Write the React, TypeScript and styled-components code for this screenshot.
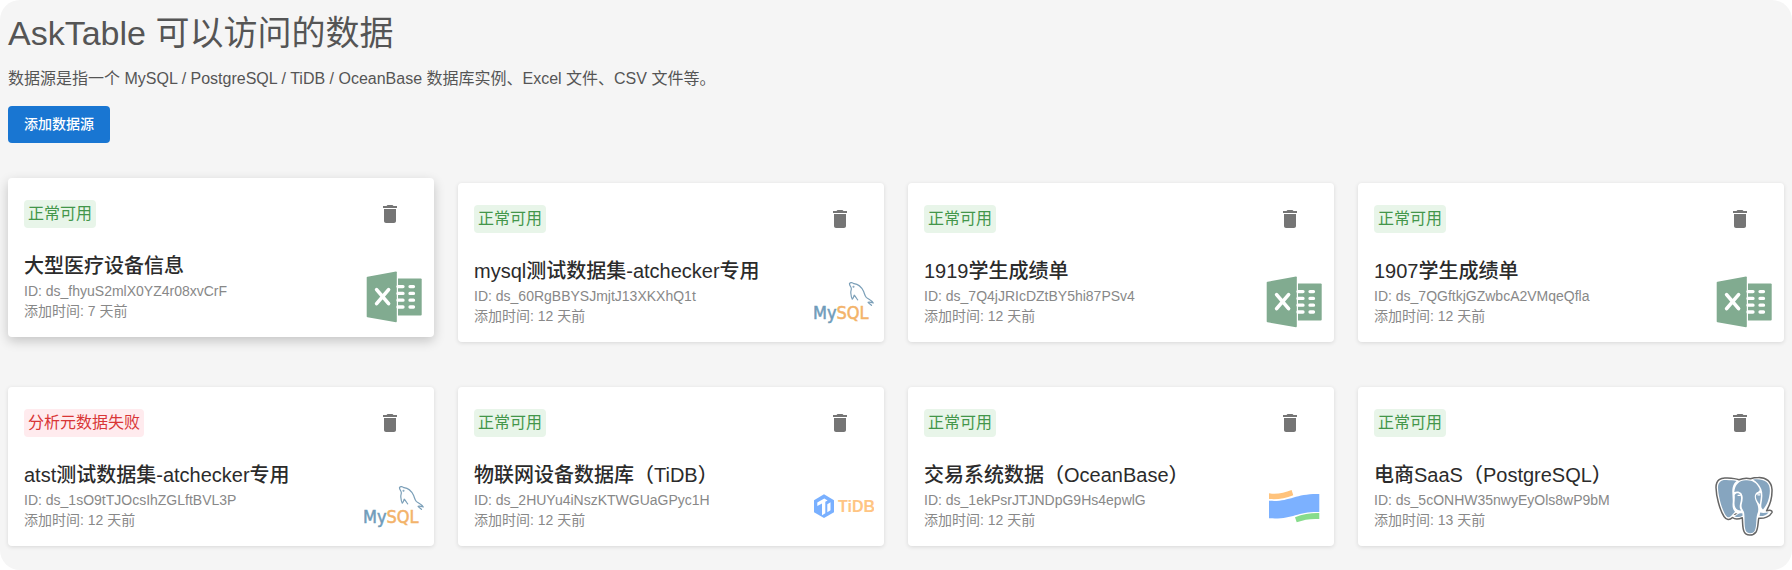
import React from 'react';
import styled, { createGlobalStyle } from 'styled-components';

const GlobalStyle = createGlobalStyle`
  *, *::before, *::after { box-sizing: border-box; }
  body {
    margin: 0;
    background: #ffffff;
    color: #2b2b2b;
    font-family: "Liberation Sans", "Noto Sans CJK SC", sans-serif;
  }
`;

const Page = styled.main`
  padding: 12px 8px 24px;
  border-radius: 20px;
  background: #f5f5f5;
`;

const PageTitle = styled.h1`
  margin: 0 0 13px;
  color: #555555;
  font-size: 34px;
  font-weight: 400;
  line-height: 42px;
`;

const Description = styled.p`
  margin: 0 0 15px;
  color: #555555;
  font-size: 16px;
  line-height: 24px;
`;

const AddButton = styled.button`
  display: block;
  margin: 0 0 40px;
  padding: 6px 16px;
  border: 0;
  border-radius: 4px;
  background: #1976d2;
  color: #ffffff;
  font-family: inherit;
  font-size: 14px;
  font-weight: 500;
  line-height: 25px;
  cursor: pointer;
`;

const CardGrid = styled.section`
  display: grid;
  grid-template-columns: repeat(4, minmax(0, 1fr));
  gap: 45px 24px;
`;

const Card = styled.article<{ $raised?: boolean }>`
  position: relative;
  padding: 16px;
  border-radius: 4px;
  background: #ffffff;
  transform: ${({ $raised }) => ($raised ? 'translateY(-5px)' : 'none')};
  box-shadow: ${({ $raised }) =>
    $raised ? '0 4px 12px rgba(0, 0, 0, 0.2)' : '0 1px 4px rgba(0, 0, 0, 0.12)'};
`;

const CardHeader = styled.div`
  display: flex;
  align-items: center;
  justify-content: space-between;
  margin-bottom: 17px;
  padding-right: 8px;
`;

const Status = styled.span<{ $failed?: boolean }>`
  padding: 2px 4px;
  border-radius: 4px;
  background: ${({ $failed }) => ($failed ? '#ffebee' : '#e8f5e9')};
  color: ${({ $failed }) => ($failed ? '#d93636' : '#43964a')};
  font-size: 16px;
  line-height: 24px;
`;

const IconButton = styled.button`
  display: flex;
  padding: 8px;
  border: 0;
  border-radius: 50%;
  background: transparent;
  color: #757575;
  cursor: pointer;
`;

const SourceName = styled.h2`
  margin: 0;
  color: #2b2b2b;
  font-size: 20px;
  font-weight: 500;
  line-height: 30px;
`;

const Meta = styled.p`
  margin: 0;
  color: #888888;
  font-size: 14px;
  line-height: 20px;
`;

const Logo = styled.svg`
  position: absolute;
  right: 10px;
  bottom: 10px;
  width: 60px;
  height: 60px;
`;

function TrashIcon() {
  return (
    <svg width="24" height="24" viewBox="0 0 24 24" fill="currentColor" aria-hidden="true">
      <path d="M6 19c0 1.1.9 2 2 2h8c1.1 0 2-.9 2-2V7H6v12zM19 4h-3.5l-1-1h-5l-1 1H5v2h14V4z" />
    </svg>
  );
}

function ExcelLogo() {
  const rows = [19.6, 26.4, 33.2, 40];
  return (
    <Logo viewBox="0 0 60 60" role="img" aria-label="Excel">
      <path d="M3.5 9.8 32 4.5q.8 0 .8.8v49q0 .9-.8.9L3.5 50.2q-.8-.2-.8-1V10.8q0-.8.8-1z" fill="#81ab90" />
      <path d="M34 11.5h22.700q1 0 1 1v35q0 1-1 1H34z" fill="#81ab90" />
      <g stroke="#ffffff" strokeLinecap="round" fill="none">
        <path d="M12.6 22.6 24.6 36.6M24.6 22.6 12.6 36.6" strokeWidth="3.600" />
        {rows.map((y) => (
          <path key={y} d={`M34 ${y}H39M46 ${y}H49.5`} strokeWidth="3.300" />
        ))}
      </g>
    </Logo>
  );
}

function MySqlLogo() {
  return (
    <Logo viewBox="0 0 60 60" role="img" aria-label="MySQL">
      <g fill="none" stroke="#7b9fb8" strokeWidth="1.200" strokeLinecap="round" strokeLinejoin="round">
        <path d="M35.5 11.5c1-1.6 3-.9 4.500.2 4.500.5 7.700 3.900 9.500 7.600 1.100 2.400 1.300 4.400 2.800 6.100 1.700 1.700 4.600 2.400 7 5.600-2.400-.9-4.200-1.200-5.200-.7.9 1.200 2.300 1.900 3.400 3.100" />
        <path d="M35.5 11.5c-.3 1.900 1.500 3.100 1.800 5 .2 1.500-.7 2.500-.5 4.500.2 2.200.6 4.600 1.500 6.200.8-.8 1.600-2.800 1.900-4 1.600 1.200 2.100 3.200 3.500 4.600" />
        <circle cx="39.5" cy="14.8" r=".4" />
      </g>
      <text
        x="-1"
        y="47"
        fill="#6f9cba"
        fontFamily="'DejaVu Sans Condensed', 'Open Sans', sans-serif"
        fontSize="18"
        stroke="#6f9cba"
        strokeWidth="0.500"
      >
        My
        <tspan fill="#f3b36a" stroke="#f3b36a">SQL</tspan>
      </text>
    </Logo>
  );
}

function TiDbLogo() {
  return (
    <Logo viewBox="0 0 60 60" role="img" aria-label="TiDB">
      <path d="M10 18.300 20 24.200V36.200L10 42 0 36.200V24.200z" fill="#79b0ff" />
      <path d="M3.300 26.600 10.300 22.500 13.600 24.400 11.300 25.800V37.300L8 39.200V27.400L3.300 30z" fill="#ffffff" />
      <path d="M13.300 28.200 16.500 26.300V34.300L13.300 36.200z" fill="#ffffff" />
      <text x="24" y="36" fill="#ffc584" fontFamily="'Liberation Sans', sans-serif" fontSize="16" fontWeight="700">
        TiDB
      </text>
    </Logo>
  );
}

function OceanBaseLogo() {
  return (
    <Logo viewBox="0 0 60 60" role="img" aria-label="OceanBase">
      <path d="M5 17.300C13 18.300 20 17 27.600 14L29.300 19.300C21 22.700 13 23.700 5 23z" fill="#ffc37c" />
      <path d="M5 24.700C25 26.500 31 17.300 55.300 18V36C32 35.500 28 44 5 42.300z" fill="#7cb1ff" />
      <path d="M31 41.300C39 38 47 36.800 55.300 37V43C47 42.500 40 43.500 32.700 46.300z" fill="#87dc8c" />
    </Logo>
  );
}

function PostgresLogo() {
  const outline =
    'M12.500 2C7 1.300 2 4 2 11.500 2.200 20 5.500 33.500 10 40.500 12.500 44.200 15.500 44.500 18.500 41.500 21 43.800 25.500 43 28.300 41.800 28.800 47 28.300 51.500 30 55.500 32 60 39 60.200 42 56 44.300 52.500 43.800 47 44.800 42.200 50 42.800 56 40.500 58 36.500 58.500 34 56 34 52.500 34.800 56 29 58.200 20 58 13.500 57.500 5.500 52 1.300 44.500 1.500 41 1.500 38.500 2 36.500 2.700 32.500 1.800 28.500 2.300 25 3.800 21 2.300 16.500 2.200 12.500 2z';
  return (
    <Logo viewBox="0 0 60 60" role="img" aria-label="PostgreSQL">
      <path d={outline} fill="#ffffff" stroke="#666666" strokeWidth="1.500" strokeLinejoin="round" />
      <g fill="#86a5bf">
        <path d="M12.500 4C7.500 3.500 4 6 4 11.500 4.200 19.500 7.500 32.500 11.500 39 13.500 42 15.300 42 17.500 39.500L21 35.700C18.500 33.300 18.300 30 18.700 26 19 20 16.800 13 20.200 7.500 21 6.200 22 5.500 22.500 5 19.500 4.200 16 4.200 12.500 4z" />
        <path d="M33 4.200C26 3.500 21 8 20.300 16 22.500 15 25.500 15.200 27.200 17 29.500 20 28.800 24 27.800 28 27 31 28.500 33.500 30 36 31 41 30 50 31.700 54.500 33.200 58.200 38.700 58 40.600 55 43 51 41.700 43 43.300 38 45 34 44.500 30 42 25.500 40 21.500 40.500 18 43 16.300 46 15 46.300 14 44.800 11.500 42.200 6.500 38.500 4.500 33 4.200z" />
        <path d="M39 3.600C44 2.600 49 3.500 52.500 6 57.500 10 56 19 54 25 52.800 28.500 50.800 31.600 49 33.500 47.500 32.300 47 31 47.400 28 48.500 22.500 49 17 47.300 13 45.500 9 42.500 5.700 39 3.600z" />
        <path d="M20.700 19C22 16.700 24.800 17 26 18.500 27.700 21 27 24.500 26 28 25.300 31.300 26 33 27 34.500 23 35 20.300 31.500 20.500 27 20.600 24.500 21 22 20.700 19z" />
        <path d="M42.200 19C43.500 17.700 45.500 17.500 47 17.500 47 21 46.300 25 45.800 28.500 43.500 25.500 41 22 42.200 19z" />
        <path d="M20.500 40.200C24 39 24.500 36.500 28.500 37.500V39.800C26 41.300 23 41.500 20.500 40.200z" />
        <path d="M46.200 36.500C49 37.300 51.500 36.700 54.500 36.500 52 39.500 48.500 40.500 45.500 40z" />
      </g>
      <path d="M24 19.300h2.200M43.800 18.800h2.200" stroke="#ffffff" strokeWidth="1.200" strokeLinecap="round" />
      <path d="M19.500 38.700 21.500 37.300 23.500 37.500 21 39" fill="#666666" />
    </Logo>
  );
}

const logos = {
  excel: ExcelLogo,
  mysql: MySqlLogo,
  tidb: TiDbLogo,
  oceanbase: OceanBaseLogo,
  postgres: PostgresLogo,
};

interface DataSource {
  id: string;
  name: string;
  added: string;
  engine: keyof typeof logos;
  failed?: boolean;
  raised?: boolean;
}

const sources: DataSource[] = [
  { id: 'ds_fhyuS2mlX0YZ4r08xvCrF', name: '大型医疗设备信息', added: '7 天前', engine: 'excel', raised: true },
  { id: 'ds_60RgBBYSJmjtJ13XKXhQ1t', name: 'mysql测试数据集-atchecker专用', added: '12 天前', engine: 'mysql' },
  { id: 'ds_7Q4jJRIcDZtBY5hi87PSv4', name: '1919学生成绩单', added: '12 天前', engine: 'excel' },
  { id: 'ds_7QGftkjGZwbcA2VMqeQfla', name: '1907学生成绩单', added: '12 天前', engine: 'excel' },
  { id: 'ds_1sO9tTJOcsIhZGLftBVL3P', name: 'atst测试数据集-atchecker专用', added: '12 天前', engine: 'mysql', failed: true },
  { id: 'ds_2HUYu4iNszKTWGUaGPyc1H', name: '物联网设备数据库（TiDB）', added: '12 天前', engine: 'tidb' },
  { id: 'ds_1ekPsrJTJNDpG9Hs4epwlG', name: '交易系统数据（OceanBase）', added: '12 天前', engine: 'oceanbase' },
  { id: 'ds_5cONHW35nwyEyOls8wP9bM', name: '电商SaaS（PostgreSQL）', added: '13 天前', engine: 'postgres' },
];

function SourceCard({ source }: { source: DataSource }) {
  const EngineLogo = logos[source.engine];
  return (
    <Card $raised={source.raised}>
      <CardHeader>
        <Status $failed={source.failed}>{source.failed ? '分析元数据失败' : '正常可用'}</Status>
        <IconButton type="button" aria-label={`删除 ${source.name}`}>
          <TrashIcon />
        </IconButton>
      </CardHeader>
      <SourceName>{source.name}</SourceName>
      <Meta>ID: {source.id}</Meta>
      <Meta>添加时间: {source.added}</Meta>
      <EngineLogo />
    </Card>
  );
}

export default function App() {
  return (
    <>
      <GlobalStyle />
      <Page lang="zh-CN">
        <PageTitle>AskTable 可以访问的数据</PageTitle>
        <Description>
          数据源是指一个 MySQL / PostgreSQL / TiDB / OceanBase 数据库实例、Excel 文件、CSV 文件等。
        </Description>
        <AddButton type="button">添加数据源</AddButton>
        <CardGrid>
          {sources.map((source) => (
            <SourceCard key={source.id} source={source} />
          ))}
        </CardGrid>
      </Page>
    </>
  );
}
